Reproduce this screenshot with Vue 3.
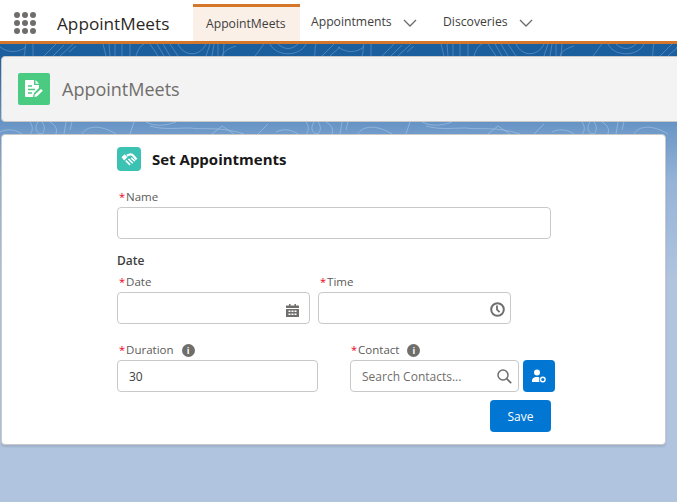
<script setup>
const tabs = [
  { label: 'AppointMeets', active: true },
  { label: 'Appointments', menu: true },
  { label: 'Discoveries', menu: true }
]
const topLines = 'M0 47C8 53 18 53 26 47M26 44C24 48 26 52 24 56M33 44V56M44 56L56 44M53 56L64 45M60 56L73 44M69 52L76 46M103 44L106 56M109 44L110 56M115 44V56M122 44V56M130 44V56M136 56C138 50 140 46 144 44M150 44L158 56M157 44L164 56M163 44L170 56M170 44L178 56M178 44C184 57 200 57 206 44M206 56L210 44M212 56L214 44M218 56V44M223 56L224 44M222 56C224 50 230 48 236 46M255 56C260 50 262 46 264 44M270 44C276 57 300 57 306 44M278 44C284 50 292 50 298 44M316 44C314 50 316 54 314 56M322 56L334 44M330 56L340 47'
const bottomLines = 'M0 132C8 128 16 130 22 134M30 122C34 128 32 132 30 134M38 122C34 128 36 134 42 134C46 130 44 124 42 122M50 122C54 124 58 128 56 134M66 122L64 134M72 122L70 130M82 134C86 126 100 124 116 134M134 122L130 134M146 122C158 128 170 124 176 122M150 126C164 130 176 128 190 128C202 130 220 126 244 134M212 134L222 126L234 134M258 134L268 124'
const topOffsets = [0, 338, 676]
const bottomOffsets = [0, 276, 552]
</script>

<template>
  <div class="page">
    <svg class="contours" width="677" height="140" viewBox="0 0 677 140" aria-hidden="true">
      <path v-for="x in topOffsets" :key="'t' + x" :d="topLines" :transform="`translate(${x} 0)`" fill="none" stroke="#6f9bc8" stroke-opacity=".6" stroke-width="1" />
      <path v-for="x in bottomOffsets" :key="'b' + x" :d="bottomLines" :transform="`translate(${x} 0)`" fill="none" stroke="#a9c6e4" stroke-opacity=".6" stroke-width="1" />
    </svg>

    <header class="nav">
      <button class="launcher" aria-label="App launcher">
        <i v-for="n in 9" :key="n"></i>
      </button>
      <div class="app-name">AppointMeets</div>
      <nav class="tabs">
        <div v-for="t in tabs" :key="t.label" class="tab" :class="{ active: t.active }">
          <span>{{ t.label }}</span>
          <svg v-if="t.menu" width="14" height="8" viewBox="0 0 14 8"><path d="M1 1l6 6 6-6" fill="none" stroke="#6b6b6b" stroke-width="1.3" /></svg>
        </div>
      </nav>
    </header>

    <section class="page-head">
      <div class="head-icon">
        <svg width="22" height="22" viewBox="0 0 22 22">
          <path d="M3 2h8v5h5v3l-5 5-1 4H3a1 1 0 0 1-1-1V3a1 1 0 0 1 1-1z" fill="#fff" />
          <path d="M12.500 2l3.500 3.700h-3.500z" fill="#fff" />
          <path d="M5 8h4M5 11.500h7M5 15h4" stroke="#4bca81" stroke-width="1.500" />
          <path d="M12 16.500l6-5.500 1.800 1.800-6 5.700-2.600.6z" fill="#fff" />
        </svg>
      </div>
      <h1>AppointMeets</h1>
    </section>

    <main class="card">
      <div class="form">
        <div class="title-row">
          <div class="title-icon">
            <svg width="18" height="15" viewBox="0 0 16 14">
              <path d="M1 5L4 2l2.500 3-3 3z" fill="#fff" />
              <path d="M6 3.500C9 1.500 11 2 12.500 4L15 7" fill="none" stroke="#fff" stroke-width="2" />
              <path d="M5 8l4 4M7.500 6.500l4 4M10 5.500l3.500 3" fill="none" stroke="#fff" stroke-width="1.500" />
            </svg>
          </div>
          <h2>Set Appointments</h2>
        </div>

        <div class="field name">
          <label><b>*</b>Name</label>
          <input class="input" type="text" />
        </div>

        <div class="section">Date</div>

        <div class="row date-row">
          <div class="field w-date">
            <label><b>*</b>Date</label>
            <div class="wrap">
              <input class="input" type="text" />
              <svg class="in-icon cal" width="13" height="13" viewBox="0 0 13 13">
                <path d="M3 0h1.500v1.500H8.500V0H10v1.500h2.500a.5.500 0 0 1 .5.500v2H0V2a.5.500 0 0 1 .5-.5H3z" fill="#6f6e6d" />
                <path fill-rule="evenodd" d="M0 5h13v7.500a.5.500 0 0 1-.5.500H.5a.5.500 0 0 1-.5-.5zM2.500 6.500V8h2V6.500zM5.500 6.500V8h2V6.500zM8.500 6.500V8h2V6.500zM2.500 9.500V11h2V9.500zM5.500 9.500V11h2V9.500zM8.500 9.500V11h2V9.500z" fill="#6f6e6d" />
              </svg>
            </div>
          </div>
          <div class="field w-date">
            <label><b>*</b>Time</label>
            <div class="wrap">
              <input class="input" type="text" />
              <svg class="in-icon clock" width="15" height="15" viewBox="0 0 15 15">
                <circle cx="7.500" cy="7.500" r="6.300" fill="none" stroke="#6f6e6d" stroke-width="2" />
                <path d="M7 3.500v4.200l2.600 2.500" fill="none" stroke="#6f6e6d" stroke-width="1.800" />
              </svg>
            </div>
          </div>
        </div>

        <div class="row lower-row">
          <div class="field w-dur">
            <label><b>*</b>Duration<span class="info">i</span></label>
            <input class="input value" type="text" value="30" />
          </div>
          <div class="field contact">
            <label class="contact-label"><b>*</b>Contact<span class="info">i</span></label>
            <div class="contact-line">
              <div class="wrap search">
                <input class="input value" type="text" placeholder="Search Contacts..." />
                <svg class="in-icon mag" width="15" height="15" viewBox="0 0 15 15">
                  <circle cx="6" cy="6" r="5" fill="none" stroke="#6f6e6d" stroke-width="1.500" />
                  <path d="M9.700 9.700l4.500 4.500" stroke="#6f6e6d" stroke-width="1.700" />
                </svg>
              </div>
              <button class="icon-btn" aria-label="New contact">
                <svg width="14" height="14" viewBox="0 0 14 14">
                  <circle cx="5" cy="3.500" r="3" fill="#fff" />
                  <path d="M0 13v-1.500c0-2 1.500-3 3.500-3.500h3c.8.500 1 1 .8 1.800A4 4 0 0 0 7.500 13z" fill="#fff" />
                  <circle cx="10.800" cy="10.500" r="2.300" fill="none" stroke="#fff" stroke-width="1.400" />
                </svg>
              </button>
            </div>
          </div>
        </div>

        <div class="actions">
          <button class="save">Save</button>
        </div>
      </div>
    </main>
  </div>
</template>

<style scoped>
* { box-sizing: border-box; }

.page {
  position: relative;
  width: 677px;
  height: 502px;
  overflow: hidden;
  font-family: "Open Sans", "Noto Sans", sans-serif;
  color: #3e3e3c;
  background: linear-gradient(180deg, #1b5f9f 0, #1b5f9f 56px, #6c98c8 128px, #95b3d8 180px, #b0c4df 280px);
}

.contours { position: absolute; left: 0; top: 0; }

.nav {
  position: relative;
  height: 44px;
  display: flex;
  align-items: stretch;
  background: #fff;
  border-bottom: 3px solid #d5772a;
}

.launcher {
  width: 22px;
  height: 21px;
  margin: 12px 0 0 14px;
  padding: 0;
  border: 0;
  background: none;
  display: grid;
  grid-template-columns: repeat(3, 6px);
  grid-auto-rows: 6px;
  gap: 2px;
}
.launcher i { border-radius: 50%; background: #706e6b; }

.app-name {
  margin-left: 21px;
  width: 136px;
  font-size: 17.2px;
  line-height: 47px;
  color: #2b2826;
}

.tabs { display: flex; align-items: stretch; margin-top: 4px; }

.tab {
  display: flex;
  align-items: center;
  gap: 11px;
  padding: 0 18px 0 11px;
  font-size: 12.2px;
  color: #3e3e3c;
}
.tab span { position: relative; top: -1px; }
.tab.active {
  width: 107px;
  padding: 0 13px;
  border-top: 3px solid #d5772a;
  background: #fbf0e8;
}
.tab:nth-child(2) { width: 132px; padding-right: 0; }

.page-head {
  position: relative;
  margin: 12px -4px 0 1px;
  height: 66px;
  display: flex;
  align-items: center;
  gap: 12px;
  padding-left: 16px;
  background: #f3f3f3;
  border: 1px solid #c9c9c9;
  border-radius: 4px;
}

.head-icon {
  width: 32px;
  height: 32px;
  display: flex;
  align-items: center;
  justify-content: center;
  background: #4bca81;
  border-radius: 2px;
  flex: none;
}

h1 {
  margin: 0;
  font-size: 18px;
  font-weight: 400;
  color: #706e6b;
}

.card {
  position: relative;
  margin: 12px 0 0 1px;
  width: 665px;
  height: 311px;
  background: #fff;
  border: 1px solid #c9c9c9;
  border-radius: 4px;
  box-shadow: 0 2px 2px rgba(0, 0, 0, .1);
  padding: 12px 0 0 115px;
}

.form { width: 440px; }

.title-row { display: flex; align-items: center; gap: 11px; height: 24px; }

.title-icon {
  width: 24px;
  height: 24px;
  display: flex;
  align-items: center;
  justify-content: center;
  background: #3cc2b3;
  border-radius: 4px;
}

h2 {
  margin: 0;
  font-size: 15px;
  font-weight: 700;
  color: #181818;
}

.field { display: flex; flex-direction: column; }

label {
  display: flex;
  align-items: center;
  height: 18px;
  margin-bottom: 1px;
  padding-left: 2px;
  font-size: 11.5px;
  line-height: 18px;
  color: #5c5a58;
}
label b {
  font-weight: 400;
  color: #ea001e;
  margin-right: 1px;
  font-size: 11px;
}

.name { margin-top: 17px; width: 434px; }

.input {
  display: block;
  width: 100%;
  height: 32px;
  padding: 0 11px;
  border: 1px solid #c9c9c9;
  border-radius: 4px;
  background: #fff;
  outline: 0;
  font: 12px "Open Sans", "Noto Sans", sans-serif;
  color: #3e3e3c;
}
.input::placeholder { color: #706e6b; opacity: 1; }

.section {
  margin-top: 13px;
  height: 17px;
  font-size: 12px;
  line-height: 17px;
  font-weight: 600;
  color: #3e3e3c;
}

.row { display: flex; }

.date-row { gap: 8px; margin-top: 4px; }
.w-date { width: 193px; }

.lower-row { margin-top: 17px; }
.w-dur { width: 201px; }
.contact { margin-left: 32px; }
.contact-label { padding-left: 1px; }
.contact-line { display: flex; gap: 4px; }

.info {
  width: 13px;
  height: 13px;
  margin-left: 8px;
  border-radius: 50%;
  background: #706e6b;
  color: #fff;
  font: 700 9px/13px "Open Sans", sans-serif;
  text-align: center;
}

.wrap { position: relative; }
.search { width: 169px; }

.in-icon { position: absolute; }
.cal { right: 11px; top: 12px; }
.clock { right: 6px; top: 10px; }
.mag { right: 7px; top: 9px; }

.icon-btn {
  width: 32px;
  height: 32px;
  padding: 0;
  display: flex;
  align-items: center;
  justify-content: center;
  background: #0176d3;
  border: 0;
  border-radius: 4px;
}

.actions { display: flex; justify-content: flex-end; width: 434px; margin-top: 8px; }

.save {
  width: 61px;
  height: 32px;
  padding: 0;
  border: 0;
  border-radius: 4px;
  background: #0176d3;
  color: #fff;
  font: 12px "Open Sans", "Noto Sans", sans-serif;
}
</style>
